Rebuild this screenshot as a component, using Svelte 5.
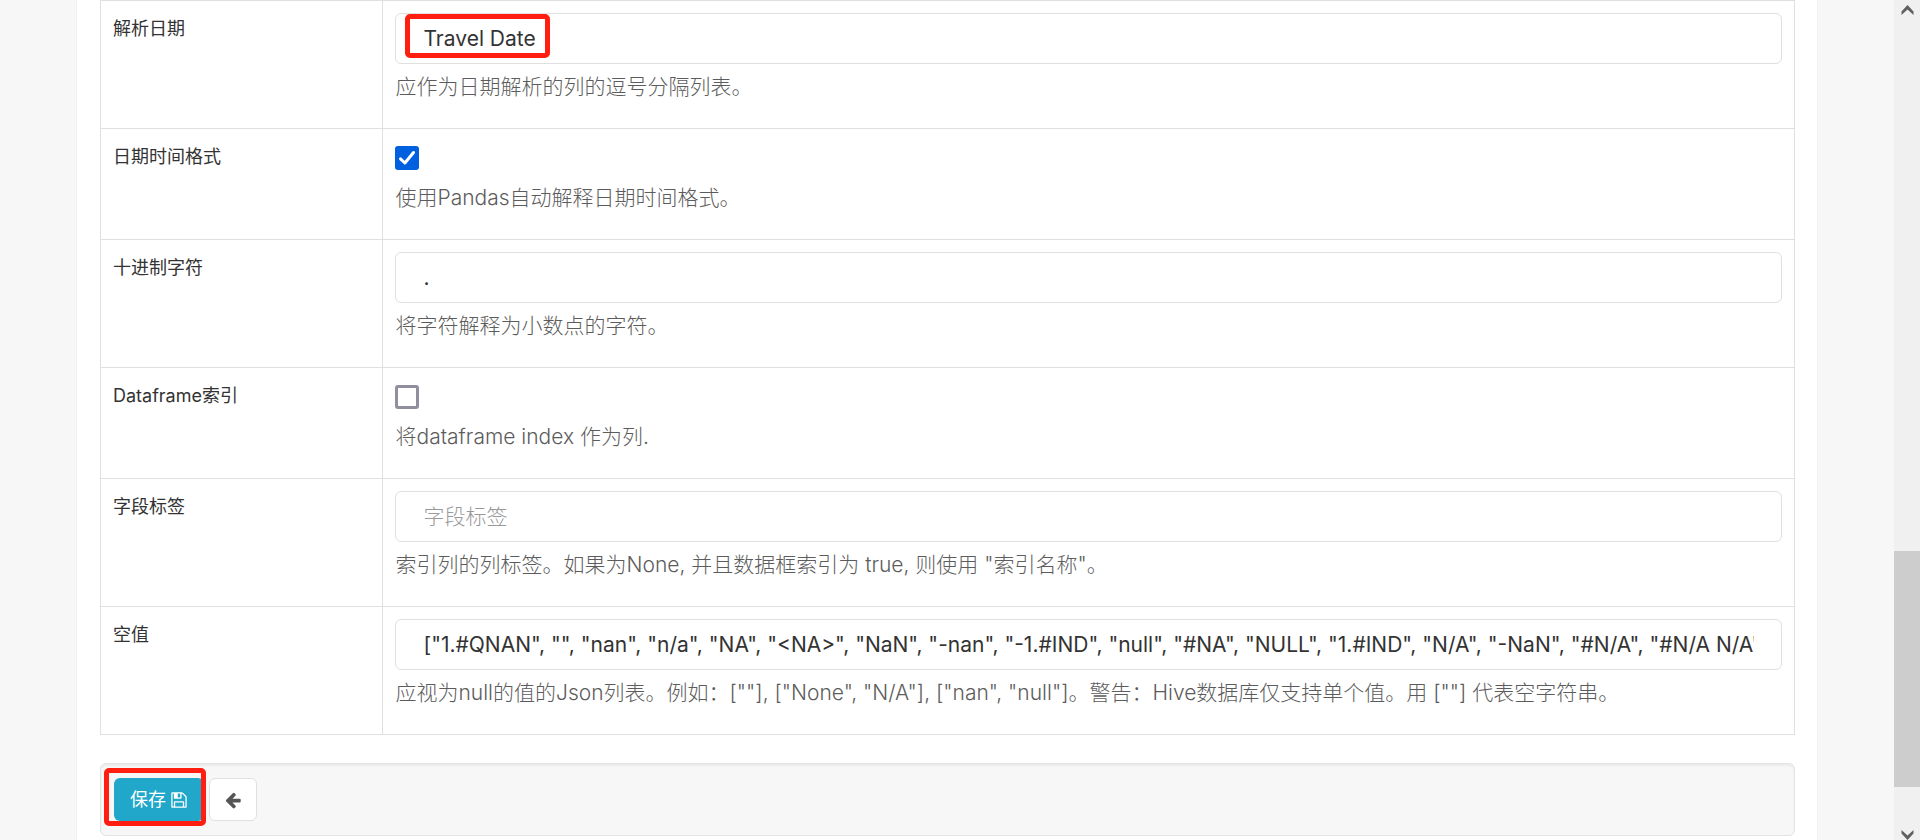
<script lang="ts">
  type Field = {
    id: string
    label: string
    kind: 'text' | 'checkbox'
    value?: string
    checked?: boolean
    placeholder?: string
    help: string
    marked?: boolean
  }

  const nullValues = [
    '1.#QNAN', '', 'nan', 'n/a', 'NA', '<NA>', 'NaN', '-nan', '-1.#IND', 'null',
    '#NA', 'NULL', '1.#IND', 'N/A', '-NaN', '#N/A', '#N/A N/A', '-1.#QNAN',
  ]

  let fields: Field[] = $state([
    {
      id: 'parse_dates',
      label: '解析日期',
      kind: 'text',
      value: 'Travel Date',
      help: '应作为日期解析的列的逗号分隔列表。',
      marked: true,
    },
    {
      id: 'infer_datetime_format',
      label: '日期时间格式',
      kind: 'checkbox',
      checked: true,
      help: '使用Pandas自动解释日期时间格式。',
    },
    {
      id: 'decimal',
      label: '十进制字符',
      kind: 'text',
      value: '.',
      help: '将字符解释为小数点的字符。',
    },
    {
      id: 'index',
      label: 'Dataframe索引',
      kind: 'checkbox',
      checked: false,
      help: '将dataframe index 作为列.',
    },
    {
      id: 'index_label',
      label: '字段标签',
      kind: 'text',
      value: '',
      placeholder: '字段标签',
      help: '索引列的列标签。如果为None, 并且数据框索引为 true, 则使用 "索引名称"。',
    },
    {
      id: 'null_values',
      label: '空值',
      kind: 'text',
      value: '[' + nullValues.map((v) => `"${v}"`).join(', ') + ']',
      help: '应视为null的值的Json列表。例如：[""], ["None", "N/A"], ["nan", "null"]。警告：Hive数据库仅支持单个值。用 [""] 代表空字符串。',
    },
  ])
</script>

<div class="window">
  <main class="container">
    <form class="panel" onsubmit={(e) => e.preventDefault()}>
      <table class="table">
        <tbody>
          {#each fields as field (field.id)}
            <tr>
              <th scope="row"><label for={field.id}>{field.label}</label></th>
              <td>
                {#if field.kind === 'checkbox'}
                  <div class="check">
                    <input id={field.id} type="checkbox" bind:checked={field.checked} />
                    <svg class="tick" viewBox="0 0 24 24" aria-hidden="true">
                      <path d="M5.5 12.8l4.4 4.2L18.5 6.5" />
                    </svg>
                  </div>
                {:else}
                  <div class="control">
                    <input
                      id={field.id}
                      class="form-control"
                      type="text"
                      spellcheck="false"
                      placeholder={field.placeholder}
                      bind:value={field.value}
                    />
                    {#if field.marked}
                      <span class="mark mark-input"></span>
                    {/if}
                  </div>
                {/if}
                <p class="help">{field.help}</p>
              </td>
            </tr>
          {/each}
        </tbody>
      </table>

      <div class="well">
        <div class="save">
          <button type="submit" class="btn btn-primary">
            保存
            <svg class="icon" viewBox="0 0 1792 1792" aria-hidden="true">
              <path d="M512 1536h768v-384h-768v384zm896 0h128v-896q0-14-10-38.5t-20-34.5l-281-281q-10-10-34-20t-39-10v416q0 40-28 68t-68 28h-576q-40 0-68-28t-28-68v-416h-128v1280h128v-416q0-40 28-68t68-28h832q40 0 68 28t28 68v416zm-384-928v-320q0-13-9.5-22.5t-22.5-9.5h-192q-13 0-22.5 9.5t-9.5 22.5v320q0 13 9.5 22.5t22.5 9.5h192q13 0 22.5-9.5t9.5-22.5zm640 32v928q0 40-28 68t-68 28h-1344q-40 0-68-28t-28-68v-1344q0-40 28-68t68-28h928q40 0 88 20t76 48l280 280q28 28 48 76t20 88z" />
            </svg>
          </button>
          <span class="mark mark-save"></span>
        </div>
        <a class="btn btn-default" href="#back" aria-label="返回">
          <svg class="icon" viewBox="0 0 1792 1792" aria-hidden="true">
            <path d="M1664 896v128q0 53-32.5 90.5t-84.5 37.5h-704l293 294q38 36 38 90t-38 90l-75 76q-37 37-90 37-52 0-91-37l-651-652q-37-37-37-90 0-52 37-91l651-650q38-38 91-38 52 0 90 38l75 74q38 38 38 91t-38 91l-293 293h704q52 0 84.5 37.5t32.5 90.5z" />
          </svg>
        </a>
      </div>
    </form>
  </main>

  <div class="scrollbar" aria-hidden="true">
    <svg class="arrow" viewBox="0 0 12 10"><path d="M0 6.5L6 0l6 6.5V10L6 4.6 0 10z" /></svg>
    <div class="track">
      <div class="thumb"></div>
    </div>
    <svg class="arrow" viewBox="0 0 12 10"><path d="M0 3.5L6 10l6-6.5V0L6 5.4 0 0z" /></svg>
  </div>
</div>

<style>
  :global(body) {
    background: #f7f7f7;
    overflow: hidden;
  }

  .window {
    display: flex;
    height: 100vh;
    overflow: hidden;
    font-family: Inter, 'Noto Sans CJK SC', sans-serif;
    color: #333;
  }

  .container {
    flex: 1;
    min-width: 0;
    padding: 0 76px;
  }

  .panel {
    box-sizing: border-box;
    min-height: 100%;
    padding: 0 22px 0 23px;
    background: #fff;
    border: solid #f1f1f1;
    border-width: 0 1px;
  }

  /* Form table */
  .table {
    width: 100%;
    table-layout: fixed;
    border-collapse: collapse;
  }

  th,
  td {
    padding: 12px;
    border: 1px solid #e0e0e0;
    vertical-align: top;
    text-align: left;
  }

  th {
    width: 15.2%;
    font-size: 18px;
    font-weight: 400;
    line-height: 32px;
  }

  .control {
    position: relative;
  }

  .form-control {
    display: block;
    box-sizing: border-box;
    width: 100%;
    height: 51px;
    padding: 0 27px;
    border: 1px solid #e0e0e0;
    border-radius: 6px;
    background: #fff;
    color: #333;
    font-family: inherit;
    font-size: 21px;
    outline: none;
  }

  .form-control::placeholder {
    color: #999;
    font-weight: 300;
    opacity: 1;
  }

  .form-control:focus {
    border-color: #20a7c9;
  }

  .help {
    margin: 8px 0 14px;
    font-size: 21px;
    font-weight: 300;
    line-height: 30px;
    color: #5c5c5c;
  }

  /* Checkbox */
  .check {
    position: relative;
    width: 24px;
    height: 24px;
    margin: 5px 0 13px;
  }

  .check input {
    appearance: none;
    display: block;
    width: 24px;
    height: 24px;
    margin: 0;
    border: 3px solid #8f8f9d;
    border-radius: 3px;
    background: #fff;
  }

  .check input:checked {
    border-color: #0060df;
    background: #0060df;
  }

  .tick {
    display: none;
    position: absolute;
    inset: 0;
    fill: none;
    stroke: #fff;
    stroke-width: 3;
    stroke-linecap: round;
    stroke-linejoin: round;
    pointer-events: none;
  }

  .check input:checked + .tick {
    display: block;
  }

  /* Footer actions */
  .well {
    display: flex;
    gap: 5px;
    margin-top: 28px;
    padding: 14px 13px;
    background: #f7f7f7;
    border: 1px solid #e3e3e3;
    border-radius: 6px;
    box-shadow: inset 0 2px 2px rgba(0, 0, 0, 0.05);
  }

  .save {
    position: relative;
  }

  .btn {
    display: flex;
    align-items: center;
    justify-content: center;
    gap: 4px;
    box-sizing: border-box;
    height: 43px;
    padding: 0 15px;
    border: 1px solid transparent;
    border-radius: 6px;
    font-family: inherit;
    font-size: 18px;
    line-height: 24px;
    cursor: pointer;
  }

  .btn-primary {
    background: #20a7c9;
    color: #fff;
  }

  .btn-default {
    width: 48px;
    background: #fff;
    border-color: #e0e0e0;
    color: #555;
  }

  .icon {
    flex: none;
    width: 18px;
    height: 18px;
    fill: currentColor;
  }

  /* Red annotation frames */
  .mark {
    position: absolute;
    box-sizing: border-box;
    border: 5px solid #ff1e10;
    border-radius: 5px;
    pointer-events: none;
  }

  .mark-input {
    top: 1px;
    left: 10px;
    width: 145px;
    height: 44px;
  }

  .mark-save {
    inset: -10px -2px -5px -10px;
  }

  /* Scrollbar */
  .scrollbar {
    display: flex;
    flex-direction: column;
    align-items: center;
    box-sizing: border-box;
    width: 26px;
    padding-top: 5px;
    background: #f0f0f0;
  }

  .arrow {
    flex: none;
    width: 13px;
    height: 10px;
    fill: #606060;
  }

  .track {
    display: flex;
    flex: 1;
    flex-direction: column;
    justify-content: flex-end;
    width: 100%;
  }

  .thumb {
    height: 29%;
    margin-bottom: 43px;
    background: #cdcdcd;
  }
</style>
